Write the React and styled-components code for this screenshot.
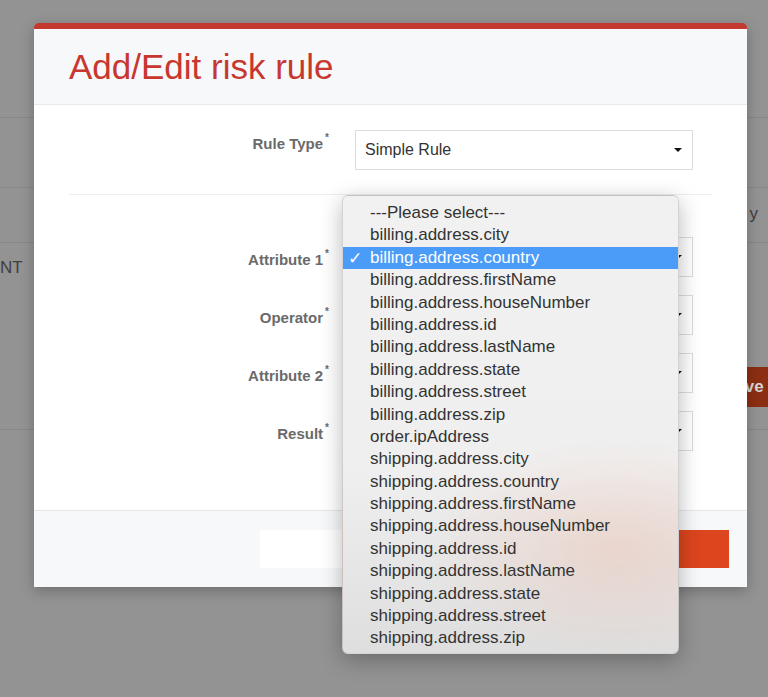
import React from "react";
import styled, { createGlobalStyle } from "styled-components";

const GlobalStyle = createGlobalStyle`
  html, body {
    margin: 0;
    padding: 0;
    background: #939393;
  }
  * {
    box-sizing: border-box;
  }
`;

const Page = styled.div`
  position: relative;
  width: 768px;
  height: 697px;
  overflow: hidden;
  background: #939393;
  font-family: "Liberation Sans", Arial, sans-serif;
`;

/* dimmed page behind the modal */
const BackRow = styled.div`
  height: ${(p) => p.h}px;
  border-bottom: 1px solid ${(p) => (p.line ? "#878787" : "transparent")};
  display: flex;
  justify-content: space-between;
  align-items: flex-start;
`;

const BackText = styled.div`
  font-size: 17px;
  line-height: 18px;
  color: #3f3f3f;
  padding-top: ${(p) => p.top || 0}px;
  margin-left: ${(p) => p.left || 0}px;
  margin-right: ${(p) => p.right || 0}px;
`;

const BackButton = styled.div`
  margin-top: 124px;
  margin-right: -36px;
  width: 92px;
  height: 40px;
  background: #8c2e12;
  color: #d6d6d6;
  font-size: 17px;
  font-weight: 700;
  line-height: 40px;
  padding-left: 12px;
`;

/* modal */
const Modal = styled.div`
  position: absolute;
  left: 34px;
  top: 23px;
  width: 713px;
  background: #fff;
  border-top: 6px solid #c3392f;
  border-radius: 5px 5px 0 0;
  box-shadow: 0 4px 14px rgba(0, 0, 0, 0.25);
`;

const Header = styled.div`
  height: 76px;
  padding: 0 35px;
  display: flex;
  align-items: center;
  background: #f7f8fa;
  border-bottom: 1px solid #e7e9eb;
`;

const Title = styled.h1`
  margin: 0;
  font-size: 35px;
  font-weight: 300;
  color: #c8372f;
`;

const Body = styled.div`
  padding: 25px 35px 59px;
`;

const Row = styled.div`
  display: grid;
  grid-template-columns: 256px 338px;
  column-gap: 30px;
  margin-top: ${(p) => p.mt || 0}px;
`;

const Label = styled.div`
  text-align: right;
  font-size: 15px;
  line-height: 20px;
  font-weight: 700;
  color: #6a6a6a;
  padding-top: ${(p) => p.top}px;
  margin-right: -4px;
`;

const Req = styled.sup`
  font-size: 10px;
  position: relative;
  top: -2px;
  margin-left: 2px;
`;

const Select = styled.div`
  height: 40px;
  border: 1px solid #dcdcdc;
  background: #fff;
  display: flex;
  align-items: center;
  justify-content: space-between;
  padding: 0 10px 0 9px;
  font-size: 16px;
  color: #333;
`;

const Caret = styled.span`
  width: 0;
  height: 0;
  border-left: 4px solid transparent;
  border-right: 4px solid transparent;
  border-top: 4px solid #111;
`;

const Divider = styled.hr`
  margin: 24px 0 0;
  border: 0;
  border-top: 1px solid #eceeef;
`;

const Footer = styled.div`
  display: flex;
  justify-content: flex-end;
  gap: 9px;
  padding: 19px 18px;
  background: #f7f8fa;
  border-top: 1px solid #e4e6e8;
`;

const Button = styled.div`
  width: 230px;
  height: 38px;
  display: flex;
  align-items: center;
  justify-content: center;
  font-size: 16px;
  font-weight: 700;
  background: ${(p) => (p.primary ? "#dc451d" : "#fff")};
  color: ${(p) => (p.primary ? "#fff" : "#555")};
`;

/* open native option list */
const Menu = styled.div`
  position: absolute;
  left: 342px;
  top: 195px;
  width: 337px;
  padding: 6px 0 3px;
  border-radius: 6px;
  border: 1px solid rgba(0, 0, 0, 0.12);
  background: radial-gradient(
      ellipse 190px 110px at 82% 77%,
      rgba(238, 170, 145, 0.3),
      rgba(238, 170, 145, 0) 100%
    ),
    linear-gradient(#f1f1f1, #efefef 60%, #dedede);
  box-shadow: 0 6px 22px rgba(0, 0, 0, 0.28);
  font-family: "Liberation Sans", Arial, sans-serif;
`;

const Option = styled.div`
  position: relative;
  height: 22.4px;
  line-height: 22.4px;
  padding-left: 27px;
  font-size: 17px;
  color: ${(p) => (p.active ? "#fff" : "#333")};
  background: ${(p) => (p.active ? "#4b9cf8" : "transparent")};
`;

const Check = styled.span`
  position: absolute;
  left: 5px;
  top: 0;
  font-family: "DejaVu Sans", sans-serif;
  font-weight: 700;
  font-size: 17px;
`;

const options = [
  "---Please select---",
  "billing.address.city",
  "billing.address.country",
  "billing.address.firstName",
  "billing.address.houseNumber",
  "billing.address.id",
  "billing.address.lastName",
  "billing.address.state",
  "billing.address.street",
  "billing.address.zip",
  "order.ipAddress",
  "shipping.address.city",
  "shipping.address.country",
  "shipping.address.firstName",
  "shipping.address.houseNumber",
  "shipping.address.id",
  "shipping.address.lastName",
  "shipping.address.state",
  "shipping.address.street",
  "shipping.address.zip",
];

const fields = [
  { label: "Attribute 1", mt: 42 },
  { label: "Operator", mt: 18 },
  { label: "Attribute 2", mt: 18 },
  { label: "Result", mt: 18 },
];

export default function App() {
  return (
    <Page>
      <GlobalStyle />
      <BackRow h={118} line />
      <BackRow h={70} line />
      <BackRow h={55} line>
        <span />
        <BackText top={17} right={10}>
          y
        </BackText>
      </BackRow>
      <BackRow h={187} line>
        <BackText top={16}>NT</BackText>
        <BackButton>Save</BackButton>
      </BackRow>

      <Modal>
        <Header>
          <Title>Add/Edit risk rule</Title>
        </Header>
        <Body>
          <Row>
            <Label top={0}>
              Rule Type<Req>*</Req>
            </Label>
            <Select>
              Simple Rule
              <Caret />
            </Select>
          </Row>
          <Divider />
          {fields.map((f) => (
            <Row key={f.label} mt={f.mt}>
              <Label top={9}>
                {f.label}
                <Req>*</Req>
              </Label>
              <Select>
                <span />
                <Caret />
              </Select>
            </Row>
          ))}
        </Body>
        <Footer>
          <Button>Cancel</Button>
          <Button primary>Save</Button>
        </Footer>
      </Modal>

      <Menu>
        {options.map((o, i) => (
          <Option key={o} active={i === 2}>
            {i === 2 && <Check>✓</Check>}
            {o}
          </Option>
        ))}
      </Menu>
    </Page>
  );
}
